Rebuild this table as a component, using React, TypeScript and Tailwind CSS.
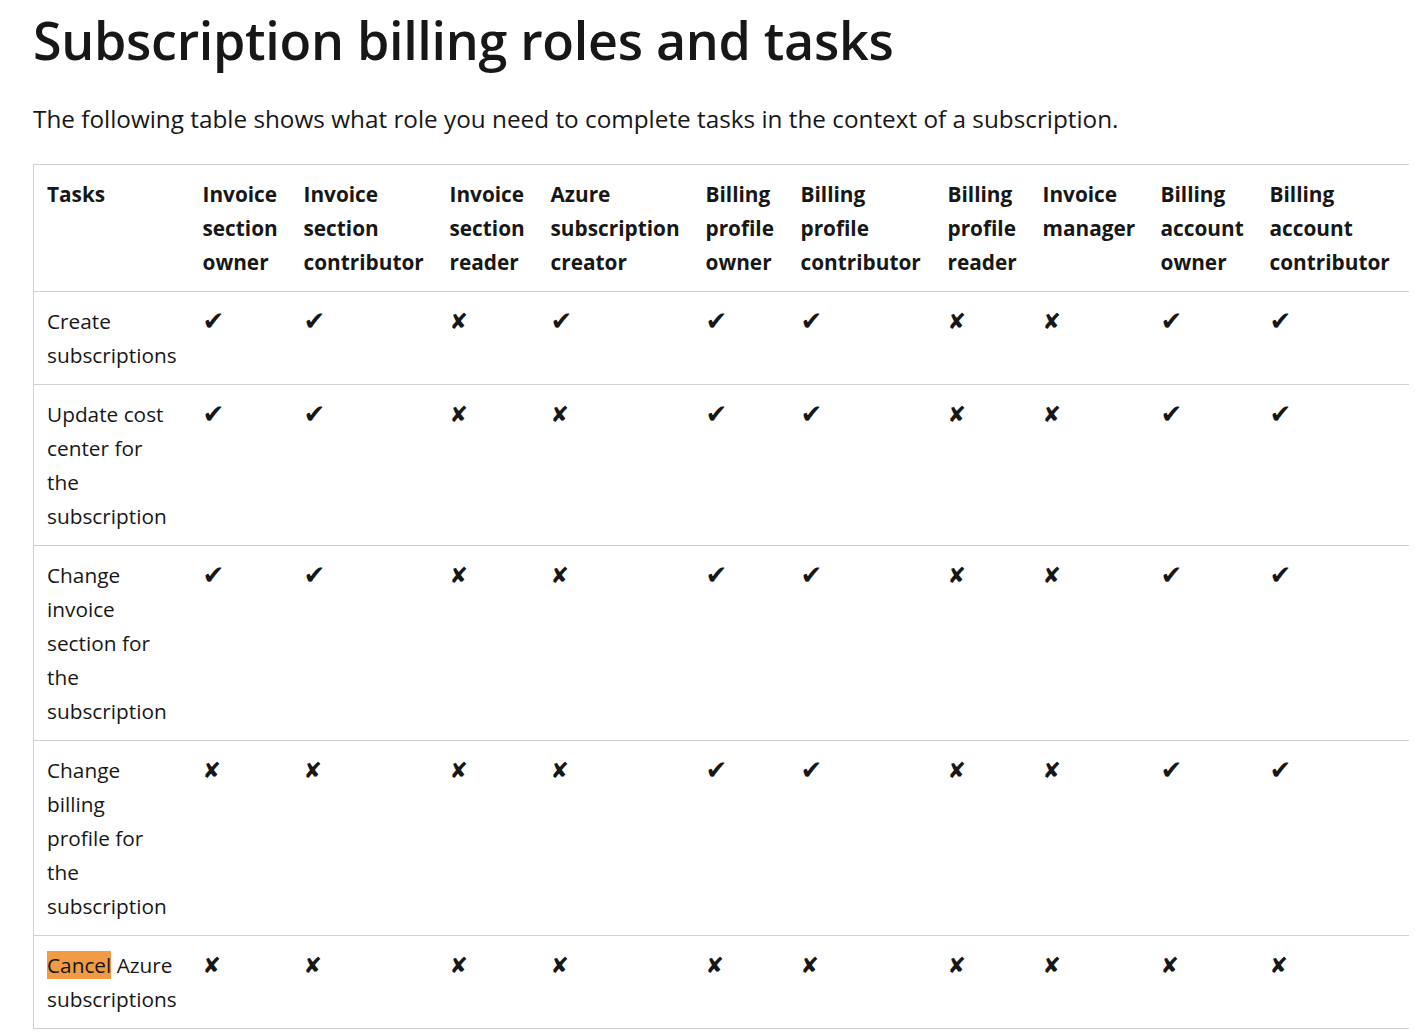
import React from "react";

const Y = "\u2714";
const N = "\u2718";

const headers = [
  "Tasks",
  "Invoice section owner",
  "Invoice section contributor",
  "Invoice section reader",
  "Azure subscription creator",
  "Billing profile owner",
  "Billing profile contributor",
  "Billing profile reader",
  "Invoice manager",
  "Billing account owner",
  "Billing account contributor",
];

const widths = [156, 101, 146, 101, 155, 95, 147, 95, 118, 109, 152];

const rows: { lines: React.ReactNode[]; marks: boolean[] }[] = [
  { lines: ["Create", "subscriptions"], marks: [true, true, false, true, true, true, false, false, true, true] },
  { lines: ["Update cost", "center for", "the", "subscription"], marks: [true, true, false, false, true, true, false, false, true, true] },
  { lines: ["Change", "invoice", "section for", "the", "subscription"], marks: [true, true, false, false, true, true, false, false, true, true] },
  { lines: ["Change", "billing", "profile for", "the", "subscription"], marks: [false, false, false, false, true, true, false, false, true, true] },
  {
    lines: [
      <>
        <span className="bg-[#f29b47]">Cancel</span> Azure
      </>,
      "subscriptions",
    ],
    marks: [false, false, false, false, false, false, false, false, false, false],
  },
];

function Mark({ yes }: { yes: boolean }) {
  return (
    <span
      className={
        yes
          ? "inline-flex h-[34px] items-center text-[26px] leading-none"
          : "inline-flex h-[34px] items-center text-[22px] leading-none"
      }
      style={{ fontFamily: '"DejaVu Sans", sans-serif' }}
    >
      {yes ? Y : N}
    </span>
  );
}

export default function App() {
  return (
    <div
      className="min-h-screen bg-white text-[#171717] pl-[33px]"
      style={{ fontFamily: '"Open Sans", "Noto Sans", sans-serif' }}
    >
      <h1 className="pt-[8px] text-[52px] leading-[64px] font-semibold tracking-[-0.3px]">
        Subscription billing roles and tasks
      </h1>
      <p className="mt-[30px] text-[24.3px] leading-[34px]">
        The following table shows what role you need to complete tasks in the context of a subscription.
      </p>
      <table className="mt-[28px] table-fixed border-collapse border-l border-[#d1d1d1] text-[20.8px] leading-[34px] w-[1375px]">
        <colgroup>
          {widths.map((w, i) => (
            <col key={i} style={{ width: w }} />
          ))}
        </colgroup>
        <thead>
          <tr className="border-y border-[#d1d1d1]">
            {headers.map((h) => (
              <th key={h} className="px-[13px] py-[12px] text-left align-top font-bold">
                {h}
              </th>
            ))}
          </tr>
        </thead>
        <tbody>
          {rows.map((r, ri) => (
            <tr key={ri} className="border-b border-[#d1d1d1]">
              <td className="px-[13px] py-[12px] align-top">
                {r.lines.map((l, li) => (
                  <div key={li} className="whitespace-nowrap">
                    {l}
                  </div>
                ))}
              </td>
              {r.marks.map((m, i) => (
                <td key={i} className="px-[13px] py-[12px] align-top">
                  <Mark yes={m} />
                </td>
              ))}
            </tr>
          ))}
        </tbody>
      </table>
    </div>
  );
}
